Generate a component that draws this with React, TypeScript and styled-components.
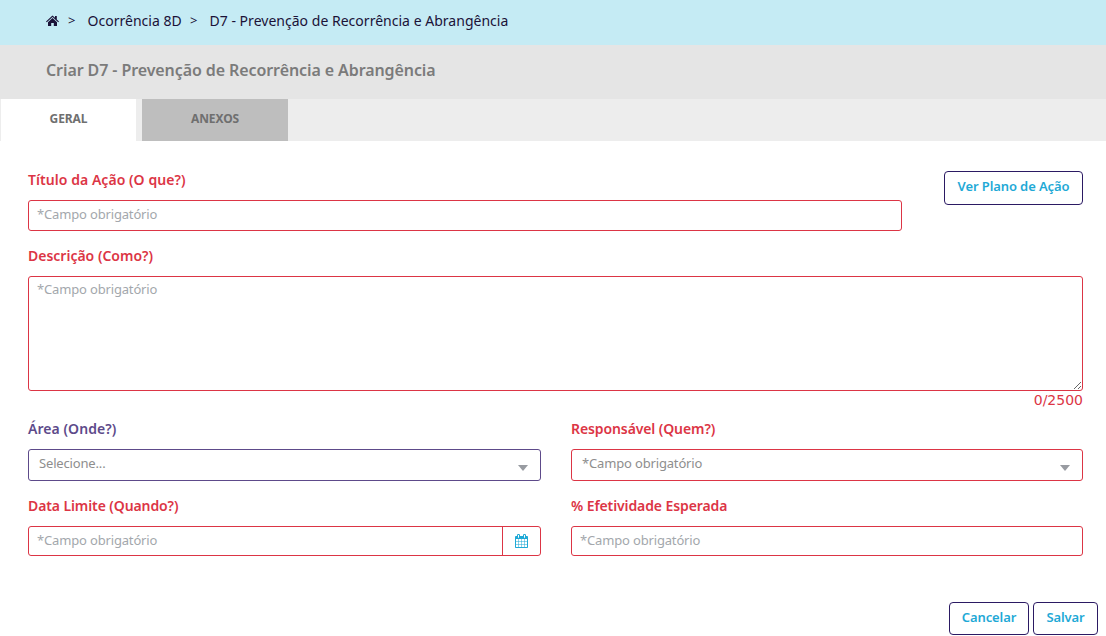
import React from "react";
import styled, { createGlobalStyle } from "styled-components";

const RED = "#dc3545";
const PURPLE = "#5d4a8a";
const NAVY = "#2b1a63";
const CYAN = "#1fa9d6";

const GlobalStyle = createGlobalStyle`
  * { box-sizing: border-box; }
  body {
    margin: 0;
    background: #fff;
    font-family: "Noto Sans", "Open Sans", sans-serif;
    font-size: 14px;
    overflow: hidden;
  }
`;

const Page = styled.div`
  height: 636px;
  display: flex;
  flex-direction: column;
`;

const Breadcrumb = styled.nav`
  height: 45px;
  flex: none;
  padding: 0 0 5px 46px;
  background: #c5ebf4;
  color: #1b1238;
  display: flex;
  align-items: center;
`;

const HomeIcon = styled.svg`
  width: 13px;
  height: 12px;
  margin: 2px 9px 0 0;
`;

const Separator = styled.span`
  width: 19.5px;
  font-size: 13px;
`;

const Crumb = styled.span<{ $width: number }>`
  width: ${(p) => p.$width}px;
  white-space: nowrap;
  letter-spacing: 0.02px;
`;

const TitleBar = styled.header`
  height: 54px;
  flex: none;
  padding: 0 0 5px 46px;
  background: #e5e5e5;
  display: flex;
  align-items: center;
`;

const Title = styled.h1`
  margin: 0;
  font-size: 16px;
  font-weight: 600;
  color: #7b7b7b;
  white-space: nowrap;
  letter-spacing: -0.09px;
`;

const Tabs = styled.div`
  height: 42px;
  flex: none;
  padding-left: 1px;
  background: #ededed;
  display: flex;
  gap: 6px;
`;

const Tab = styled.div<{ $active?: boolean; $width: number }>`
  width: ${(p) => p.$width}px;
  padding-bottom: 3px;
  background: ${(p) => (p.$active ? "#fff" : "#bebebe")};
  color: #6f6f6f;
  font-size: 12px;
  font-weight: 700;
  letter-spacing: -0.1px;
  display: flex;
  align-items: center;
  justify-content: center;
`;

const Form = styled.main`
  padding: 30px 23px 0 28px;
  display: flex;
  flex-direction: column;
`;

const TopRow = styled.div`
  display: flex;
  justify-content: space-between;
  align-items: flex-start;
  height: 76px;
`;

const Columns = styled.div`
  display: grid;
  grid-template-columns: 513px 512px;
  column-gap: 30px;
`;

const Field = styled.div<{ $width?: number; $height?: number }>`
  width: ${(p) => (p.$width ? `${p.$width}px` : "100%")};
  height: ${(p) => (p.$height ? `${p.$height}px` : "auto")};
`;

const Label = styled.label<{ $color?: string; $spacing?: number }>`
  display: block;
  height: 29px;
  line-height: 18px;
  font-size: 14px;
  font-weight: 600;
  white-space: nowrap;
  color: ${(p) => p.$color ?? RED};
  letter-spacing: ${(p) => p.$spacing ?? 0}px;
`;

const Input = styled.div<{ $height: number }>`
  height: ${(p) => p.$height}px;
  border: 1px solid ${RED};
  border-radius: 3px;
  display: flex;
  align-items: stretch;
`;

const Placeholder = styled.span`
  flex: 1;
  padding: 0 0 3px 8px;
  color: #a3a7ac;
  font-size: 13px;
  line-height: 18px;
  letter-spacing: -0.16px;
  display: flex;
  align-items: center;
`;

const TextArea = styled.textarea`
  display: block;
  width: 100%;
  height: 115px;
  padding: 3px 8px;
  border: 1px solid ${RED};
  border-radius: 3px;
  outline: none;
  font: 13px/18px "Noto Sans", "Open Sans", sans-serif;
  letter-spacing: -0.16px;
  &::placeholder { color: #a3a7ac; opacity: 1; }
`;

const Counter = styled.div`
  height: 29px;
  line-height: 18px;
  text-align: right;
  color: ${RED};
  font-family: "DejaVu Sans", sans-serif;
  font-size: 14px;
`;

const Select = styled.div<{ $color: string }>`
  height: 32px;
  padding: 0 12px 0 10px;
  border: 1px solid ${(p) => p.$color};
  border-radius: 3px;
  color: #8e8e8e;
  font-size: 13px;
  display: flex;
  align-items: center;
  justify-content: space-between;
`;

const SelectValue = styled.span`
  padding-bottom: 4px;
  line-height: 18px;
  letter-spacing: -0.16px;
  white-space: nowrap;
`;

const Caret = styled.span`
  margin-top: 6px;
  border: 5.5px solid transparent;
  border-top: 6px solid #989ba1;
  border-bottom: 0;
`;

const CalendarButton = styled.span`
  width: 38px;
  border-left: 1px solid ${RED};
  color: ${CYAN};
  display: flex;
  align-items: center;
  justify-content: center;
`;

const CalendarIcon = styled.svg`
  width: 13px;
  height: 14px;
`;

const Button = styled.button<{ $width: number; $height: number; $lift?: number }>`
  width: ${(p) => p.$width}px;
  height: ${(p) => p.$height}px;
  padding: 0 0 ${(p) => p.$lift ?? 3}px;
  border: 1px solid ${NAVY};
  border-radius: 4px;
  background: #fff;
  color: ${CYAN};
  font-family: inherit;
  font-size: 13px;
  font-weight: 600;
  letter-spacing: -0.1px;
  white-space: nowrap;
`;

const Footer = styled.footer`
  margin-top: auto;
  padding: 0 8px 1px 0;
  display: flex;
  justify-content: flex-end;
  gap: 4px;
`;

const REQUIRED = "*Campo obrigatório";

export default function App() {
  return (
    <Page>
      <GlobalStyle />
      <Breadcrumb>
        <HomeIcon viewBox="0 0 13 12" fill="currentColor">
          <path d="M6.5 0.4 9 2.7V1H10.8V4.4L13 6.4 12.2 7.2 6.5 2.1 0.8 7.2 0 6.4Z" />
          <path d="M6.5 3.1 11 7.2V11H7.8V8H5.2V11H2V7.2Z" />
        </HomeIcon>
        <Separator>&gt;</Separator>
        <Crumb $width={102.5}>Ocorrência 8D</Crumb>
        <Separator>&gt;</Separator>
        <Crumb $width={300}>D7 - Prevenção de Recorrência e Abrangência</Crumb>
      </Breadcrumb>
      <TitleBar>
        <Title>Criar D7 - Prevenção de Recorrência e Abrangência</Title>
      </TitleBar>
      <Tabs>
        <Tab $active $width={135}>GERAL</Tab>
        <Tab $width={146}>ANEXOS</Tab>
      </Tabs>
      <Form>
        <TopRow>
          <Field $width={874}>
            <Label $spacing={0.05}>Título da Ação (O que?)</Label>
            <Input $height={31}>
              <Placeholder>{REQUIRED}</Placeholder>
            </Input>
          </Field>
          <Button $width={139} $height={34} $lift={4}>Ver Plano de Ação</Button>
        </TopRow>
        <Field>
          <Label>Descrição (Como?)</Label>
          <TextArea placeholder={REQUIRED} />
          <Counter>0/2500</Counter>
        </Field>
        <Columns>
          <Field $height={77}>
            <Label $color={PURPLE} $spacing={0.06}>Área (Onde?)</Label>
            <Select $color={PURPLE}>
              <SelectValue>Selecione...</SelectValue>
              <Caret />
            </Select>
          </Field>
          <Field $height={77}>
            <Label $spacing={-0.1}>Responsável (Quem?)</Label>
            <Select $color={RED}>
              <SelectValue>{REQUIRED}</SelectValue>
              <Caret />
            </Select>
          </Field>
          <Field>
            <Label $spacing={-0.1}>Data Limite (Quando?)</Label>
            <Input $height={30}>
              <Placeholder>{REQUIRED}</Placeholder>
              <CalendarButton>
                <CalendarIcon viewBox="0 0 1664 1792" fill="currentColor">
                  <path transform="translate(-64 0)" d="M192 1664h288v-288h-288v288zm352 0h320v-288h-320v288zm-352-352h288v-320h-288v320zm352 0h320v-320h-320v320zm-352-384h288v-288h-288v288zm736 736h320v-288h-320v288zm-384-736h320v-288h-320v288zm768 736h288v-288h-288v288zm-384-352h320v-320h-320v320zm-352-864v-288q0-13-9.5-22.5t-22.5-9.5h-64q-13 0-22.5 9.5t-9.5 22.5v288q0 13 9.5 22.5t22.5 9.5h64q13 0 22.5-9.5t9.5-22.5zm736 864h288v-320h-288v320zm-384-384h320v-288h-320v288zm384 0h288v-288h-288v288zm32-480v-288q0-13-9.5-22.5t-22.5-9.5h-64q-13 0-22.5 9.5t-9.5 22.5v288q0 13 9.5 22.5t22.5 9.5h64q13 0 22.5-9.5t9.5-22.5zm384-64v1280q0 52-38 90t-90 38h-1408q-52 0-90-38t-38-90v-1280q0-52 38-90t90-38h128v-96q0-66 47-113t113-47h64q66 0 113 47t47 113v96h384v-96q0-66 47-113t113-47h64q66 0 113 47t47 113v96h128q52 0 90 38t38 90z" />
                </CalendarIcon>
              </CalendarButton>
            </Input>
          </Field>
          <Field>
            <Label $spacing={-0.1}>% Efetividade Esperada</Label>
            <Input $height={30}>
              <Placeholder>{REQUIRED}</Placeholder>
            </Input>
          </Field>
        </Columns>
      </Form>
      <Footer>
        <Button $width={80} $height={33}>Cancelar</Button>
        <Button $width={65} $height={33}>Salvar</Button>
      </Footer>
    </Page>
  );
}
